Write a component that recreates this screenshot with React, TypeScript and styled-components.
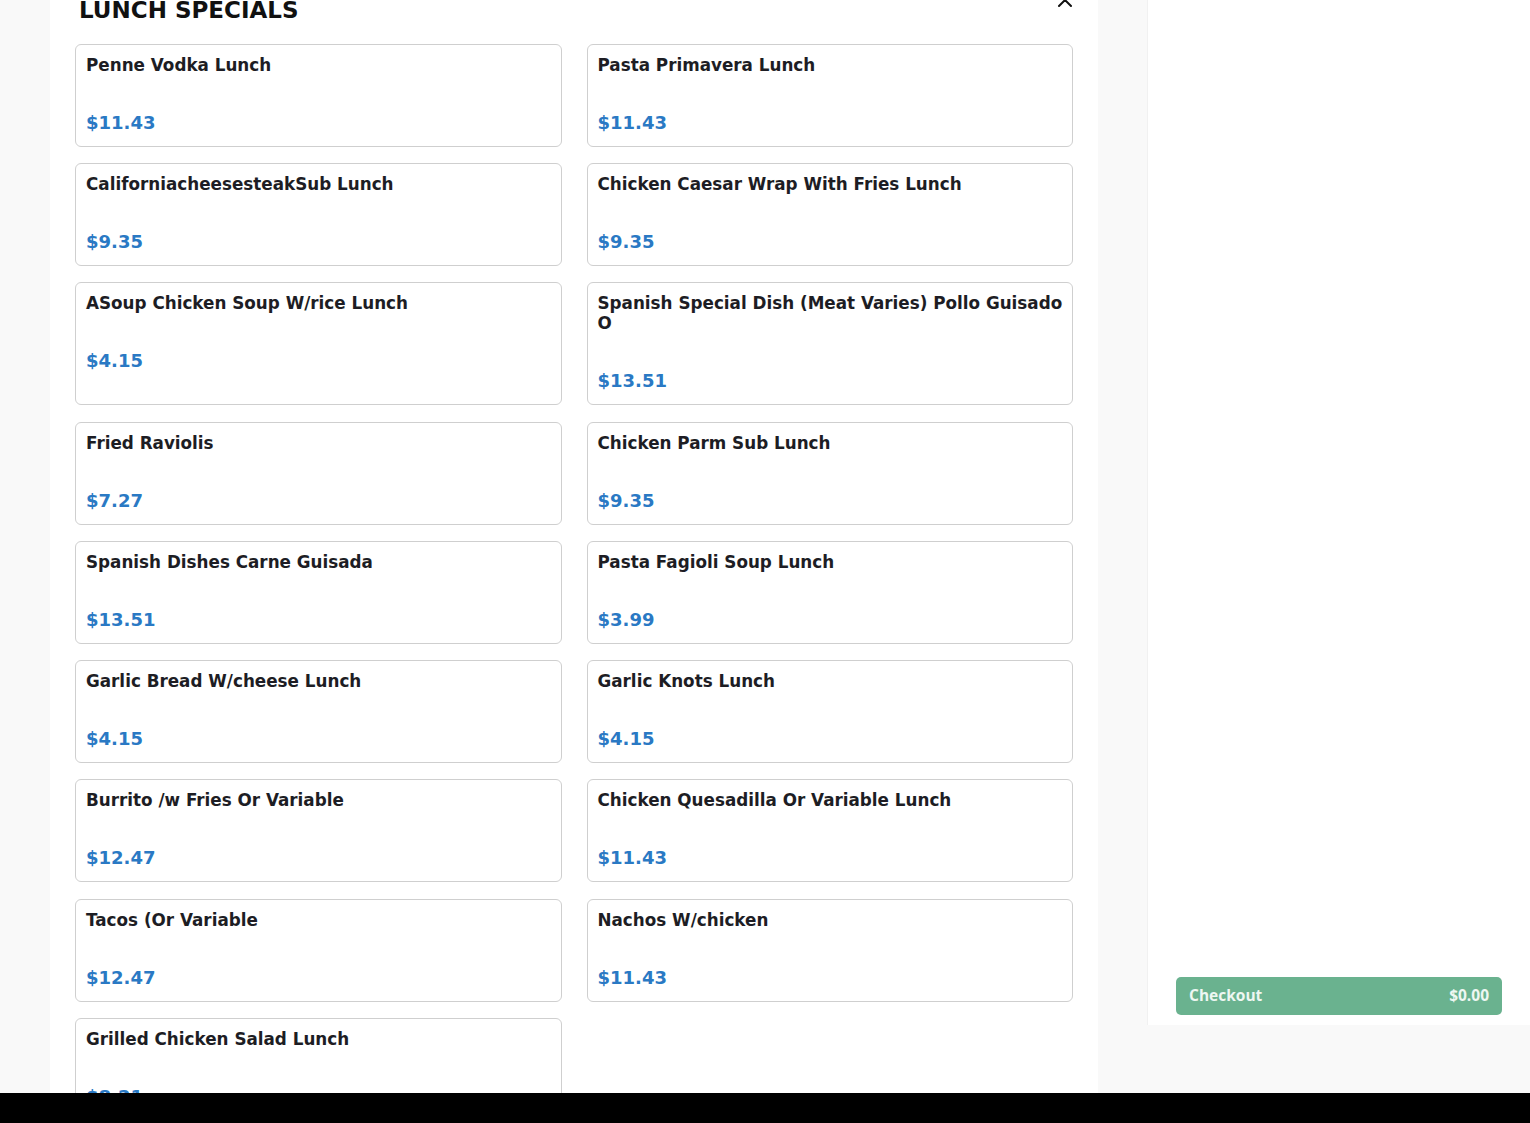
import React from "react";
import styled, { createGlobalStyle } from "styled-components";
import { ChevronUp } from "lucide-react";

const GlobalStyle = createGlobalStyle`
  html, body {
    margin: 0;
    padding: 0;
    height: 100%;
    overflow: hidden;
    background: #f9f9f9;
    font-family: "DejaVu Sans", "Liberation Sans", sans-serif;
  }
  #root { height: 100%; }
`;

const Page = styled.div`
  display: flex;
  flex-direction: column;
  height: 1123px;
`;

const Main = styled.div`
  flex: 1;
  display: flex;
  align-items: flex-start;
  padding-left: 50px;
  gap: 49px;
  min-height: 0;
`;

const MenuPanel = styled.section`
  width: 1048px;
  height: 100%;
  background: #ffffff;
  box-sizing: border-box;
  padding: 0 25px;
  overflow: hidden;
`;

const HeadingRow = styled.div`
  display: flex;
  justify-content: space-between;
  align-items: flex-start;
  margin-top: -4px;
  padding-left: 4px;
`;

const Heading = styled.h2`
  margin: 0;
  font-family: "DejaVu Sans", sans-serif;
  font-weight: 700;
  font-size: 23px;
  line-height: 28px;
  color: #111111;
`;

const CollapseButton = styled.button`
  border: 0;
  background: transparent;
  padding: 0;
  margin: -5px -4px 0 0;
  width: 24px;
  height: 24px;
  color: #111111;
  display: flex;
  cursor: pointer;
`;

const Grid = styled.div`
  display: grid;
  grid-template-columns: 1fr 1fr;
  column-gap: 25px;
  row-gap: 16.25px;
  margin-top: 19.75px;
`;

const Card = styled.div`
  border: 1px solid #cfcfcf;
  border-radius: 6px;
  padding: 10px 7px 12px 10px;
  display: flex;
  flex-direction: column;
  background: #ffffff;
`;

const ItemName = styled.div`
  font-family: "DejaVu Sans", sans-serif;
  font-weight: 700;
  font-size: 16.8px;
  line-height: 20px;
  color: #1d1d24;
`;

const ItemPrice = styled.div`
  margin-top: 37px;
  font-family: "DejaVu Sans", sans-serif;
  font-weight: 700;
  font-size: 18px;
  line-height: 22px;
  color: #2a79c4;
`;

const Sidebar = styled.aside`
  width: 383px;
  height: 1025px;
  box-sizing: border-box;
  background: #ffffff;
  border-left: 1px solid #f1f1f1;
  display: flex;
  flex-direction: column;
  justify-content: flex-end;
  padding: 0 28px 10px 28px;
`;

const CheckoutButton = styled.button`
  display: flex;
  justify-content: space-between;
  align-items: center;
  height: 38px;
  width: 100%;
  border: 0;
  border-radius: 5px;
  background: #6ab28f;
  color: #eef7f2;
  padding: 0 13px 2px;
  font-family: "Open Sans", "Lato", sans-serif;
  font-weight: 700;
  font-size: 15.5px;
  cursor: pointer;
`;

const BottomBar = styled.div`
  height: 30px;
  flex-shrink: 0;
  background: #000000;
`;

const items: { name: string; price: string }[] = [
  { name: "Penne Vodka Lunch", price: "$11.43" },
  { name: "Pasta Primavera Lunch", price: "$11.43" },
  { name: "CaliforniacheesesteakSub Lunch", price: "$9.35" },
  { name: "Chicken Caesar Wrap With Fries Lunch", price: "$9.35" },
  { name: "ASoup Chicken Soup W/rice Lunch", price: "$4.15" },
  { name: "Spanish Special Dish (Meat Varies) Pollo Guisado O", price: "$13.51" },
  { name: "Fried Raviolis", price: "$7.27" },
  { name: "Chicken Parm Sub Lunch", price: "$9.35" },
  { name: "Spanish Dishes Carne Guisada", price: "$13.51" },
  { name: "Pasta Fagioli Soup Lunch", price: "$3.99" },
  { name: "Garlic Bread W/cheese Lunch", price: "$4.15" },
  { name: "Garlic Knots Lunch", price: "$4.15" },
  { name: "Burrito /w Fries Or Variable", price: "$12.47" },
  { name: "Chicken Quesadilla Or Variable Lunch", price: "$11.43" },
  { name: "Tacos (Or Variable", price: "$12.47" },
  { name: "Nachos W/chicken", price: "$11.43" },
  { name: "Grilled Chicken Salad Lunch", price: "$8.21" },
];

export default function App() {
  return (
    <>
      <GlobalStyle />
      <Page>
        <Main>
          <MenuPanel>
            <HeadingRow>
              <Heading>LUNCH SPECIALS</Heading>
              <CollapseButton aria-label="Collapse">
                <ChevronUp size={24} strokeWidth={2} />
              </CollapseButton>
            </HeadingRow>
            <Grid>
              {items.map((it) => (
                <Card key={it.name}>
                  <ItemName>{it.name}</ItemName>
                  <ItemPrice>{it.price}</ItemPrice>
                </Card>
              ))}
            </Grid>
          </MenuPanel>
          <Sidebar>
            <CheckoutButton>
              <span>Checkout</span>
              <span>$0.00</span>
            </CheckoutButton>
          </Sidebar>
        </Main>
        <BottomBar />
      </Page>
    </>
  );
}
